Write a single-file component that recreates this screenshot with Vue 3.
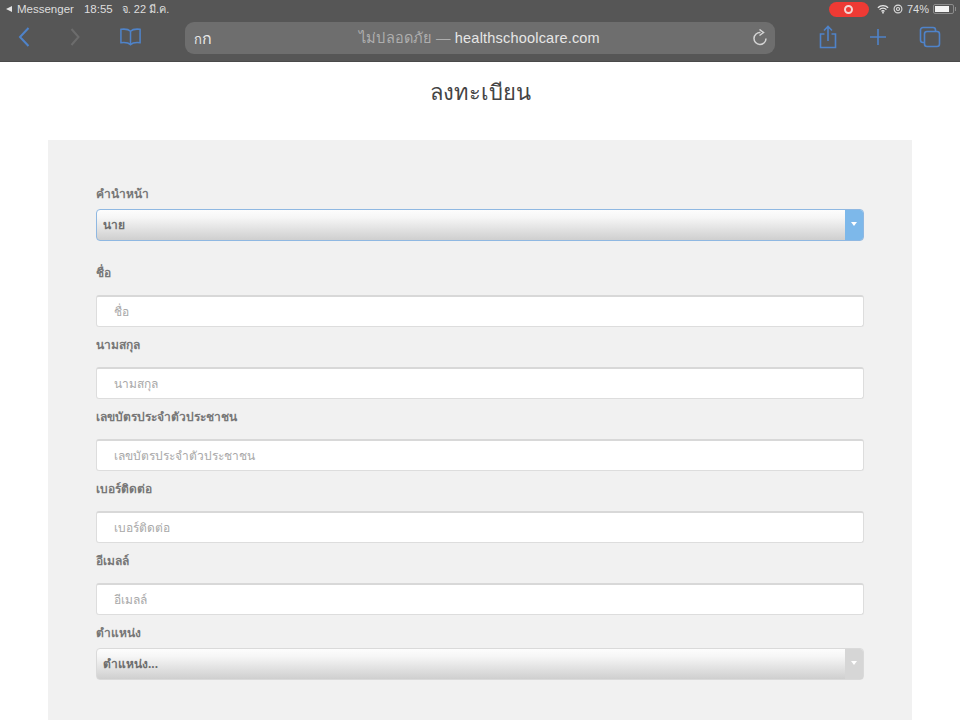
<script setup>
const inputs = ['ชื่อ', 'นามสกุล', 'เลขบัตรประจำตัวประชาชน', 'เบอร์ติดต่อ', 'อีเมลล์']
</script>

<template>
  <div class="page">
    <header class="chrome">
      <div class="status">
        <div class="status-left">
          <span class="back-tri"></span>
          <span>Messenger</span>
          <span class="time">18:55</span>
          <span class="date">จ. 22 มี.ค.</span>
        </div>
        <div class="status-right">
          <span class="rec"><span class="rec-dot"></span></span>
          <svg class="wifi" width="12" height="10" viewBox="0 0 14 11">
            <path d="M1 4a8.500 8.500 0 0 1 12 0M3 6.300a5.300 5.300 0 0 1 8 0M5.200 8.300a2.500 2.500 0 0 1 3.600 0" fill="none" stroke="#e8e8e8" stroke-width="1.500" />
            <circle cx="7" cy="9.800" r="1" fill="#e8e8e8" />
          </svg>
          <svg width="10" height="10" viewBox="0 0 11 11">
            <circle cx="5.500" cy="5.500" r="4.300" fill="none" stroke="#ddd" stroke-width="1.200" />
            <circle cx="5.500" cy="5.500" r="1.700" fill="none" stroke="#ddd" stroke-width="1.200" />
          </svg>
          <span class="pct">74%</span>
          <span class="battery"><span class="battery-fill"></span></span>
          <span class="battery-tip"></span>
        </div>
      </div>
      <div class="toolbar">
        <div class="tools-left">
          <svg width="14" height="22" viewBox="0 0 14 22"><path d="M11.500 2 3 11l8.500 9" fill="none" stroke="#4f83c9" stroke-width="2" /></svg>
          <svg class="forward" width="14" height="22" viewBox="0 0 14 22"><path d="M3.500 3l7 8-7 8" fill="none" stroke="#6c6c6c" stroke-width="2" /></svg>
          <svg class="book" width="23" height="20" viewBox="0 0 24 20">
            <path d="M12 4C10 2 6 1.500 2 2v14c4-.5 8 0 10 2 2-2 6-2.500 10-2V2c-4-.5-8 0-10 2zM12 4v14" fill="none" stroke="#4f83c9" stroke-width="1.600" />
          </svg>
        </div>
        <div class="address">
          <span class="aa"><span class="aa-small">ก</span>ก</span>
          <span class="url"><span class="unsafe">ไม่ปลอดภัย — </span>healthschoolcare.com</span>
          <svg class="reload" width="16" height="18" viewBox="0 0 16 18">
            <path d="M8.500 3.500a6 6 0 1 0 5.500 6" fill="none" stroke="#d4d4d4" stroke-width="1.500" />
            <path d="M7.500 0.500l4 3-4 3" fill="none" stroke="#d4d4d4" stroke-width="1.500" />
          </svg>
        </div>
        <div class="tools-right">
          <svg width="18" height="24" viewBox="0 0 18 24">
            <path d="M5.500 9H1.500v13.500h15V9h-4M9 16V2M5 5.500 9 1.500l4 4" fill="none" stroke="#4f83c9" stroke-width="1.600" />
          </svg>
          <svg width="16" height="16" viewBox="0 0 16 16"><path d="M8 0v16M0 8h16" stroke="#4f83c9" stroke-width="1.600" /></svg>
          <svg width="22" height="22" viewBox="0 0 22 22">
            <path d="M5.500 16.500H4A2.500 2.500 0 0 1 1.500 14V4A2.500 2.500 0 0 1 4 1.500h10A2.500 2.500 0 0 1 16.500 4v1.500" fill="none" stroke="#4f83c9" stroke-width="1.600" />
            <rect x="5.500" y="5.500" width="15" height="15" rx="2.500" fill="none" stroke="#4f83c9" stroke-width="1.600" />
          </svg>
        </div>
      </div>
    </header>

    <h1 class="title">ลงทะเบียน</h1>

    <form class="panel">
      <label class="label">คำนำหน้า</label>
      <div class="select active">
        <span class="select-text">นาย</span>
        <span class="select-btn"><span class="caret"></span></span>
      </div>

      <div v-for="(name, i) in inputs" :key="name" class="field" :class="{ first: i === 0 }">
        <label class="label">{{ name }}</label>
        <input class="input" type="text" :placeholder="name" />
      </div>

      <label class="label last-label">ตำแหน่ง</label>
      <div class="select">
        <span class="select-text">ตำแหน่ง...</span>
        <span class="select-btn"><span class="caret"></span></span>
      </div>
    </form>
  </div>
</template>

<style>
html, body { margin: 0; overflow: hidden; background: #fff; }
</style>

<style scoped>
.page {
  width: 960px;
  height: 720px;
  overflow: hidden;
  font-family: "Liberation Sans", "Noto Sans", sans-serif;
  background: #fff;
}
.chrome {
  height: 62px;
  background: #565656;
  box-sizing: border-box;
  border-bottom: 1px solid #4a4a4a;
}
.status {
  height: 18px;
  display: flex;
  justify-content: space-between;
  align-items: center;
  padding: 0 4px 0 6px;
  font-size: 11.5px;
  color: #dedede;
}
.status-left { display: flex; align-items: center; gap: 5px; }
.back-tri {
  width: 0;
  height: 0;
  border: 3.500px solid transparent;
  border-right: 6px solid #e4e4e4;
  border-left: 0;
}
.time { margin-left: 5px; }
.date { margin-left: 4px; font-size: 11px; }
.status-right { display: flex; align-items: center; gap: 4px; }
.rec {
  width: 40px;
  height: 15px;
  border-radius: 8px;
  background: #ee3a34;
  display: flex;
  align-items: center;
  justify-content: center;
  margin-right: 4px;
}
.rec-dot {
  width: 5px;
  height: 5px;
  border-radius: 50%;
  background: #ee3a34;
  border: 2px solid #f5d5d3;
}
.pct { font-size: 11px; }
.battery {
  width: 21px;
  height: 10px;
  box-sizing: border-box;
  border: 1px solid #8c8c8c;
  border-radius: 2px;
  padding: 1px;
  display: flex;
}
.battery-fill { width: 14px; background: #f4f4f4; }
.battery-tip { width: 1px; height: 4px; background: #8c8c8c; margin-left: -3px; }
.toolbar {
  height: 43px;
  display: flex;
  align-items: flex-start;
}
.tools-left {
  width: 185px;
  display: flex;
  align-items: center;
  height: 38px;
  padding-left: 17px;
  box-sizing: border-box;
}
.forward { margin-left: 37px; }
.book { margin-left: 37px; }
.address {
  width: 590px;
  height: 32px;
  margin-top: 4px;
  border-radius: 9px;
  background: #6e6e6e;
  display: flex;
  align-items: center;
  box-sizing: border-box;
  padding: 0 7px 0 9px;
  font-size: 14.500px;
  color: #e6e6e6;
}
.aa { font-size: 16px; color: #e8e8e8; }
.aa-small { font-size: 13px; }
.url {
  flex: 1;
  text-align: center;
  padding: 0 5px 2px 0;
  letter-spacing: 0.2px;
  color: #e6e6e6;
}
.unsafe { color: #aeaeae; }
.tools-right {
  flex: 1;
  height: 38px;
  display: flex;
  align-items: center;
  justify-content: space-between;
  padding: 0 19px 0 44px;
}
.title {
  margin: 18px 0 0;
  height: 60px;
  font-size: 22px;
  font-weight: 400;
  line-height: 25px;
  text-align: center;
  color: #444;
}
.panel {
  background: #f1f1f1;
  margin: 0 48px;
  height: 600px;
  padding: 45px 48px 0;
  box-sizing: border-box;
}
.label {
  display: block;
  height: 16px;
  line-height: 18px;
  font-size: 12px;
  font-weight: 700;
  color: #777;
  margin-bottom: 8px;
}
.field { margin-top: 9px; }
.field .label { margin-bottom: 15px; }
.field.first { margin-top: 23px; }
.last-label { margin-top: 9px; }
.input {
  display: block;
  width: 100%;
  height: 32px;
  box-sizing: border-box;
  background: #fff;
  border: 1px solid #ddd;
  border-top: 2px solid #d8d8d8;
  border-radius: 3px;
  padding: 0 17px;
  font: 12px "Liberation Sans", "Noto Sans", sans-serif;
  color: #555;
  outline: none;
}
.input::placeholder { color: #a8a8a8; opacity: 1; }
.select {
  height: 32px;
  box-sizing: border-box;
  display: flex;
  border: 1px solid #dadada;
  border-radius: 4px;
  overflow: hidden;
  background: linear-gradient(#fdfdfd, #f6f6f6 25%, #cfcfcf);
}
.select.active { border-color: #8fb8e2; }
.select-text {
  flex: 1;
  padding-left: 6px;
  line-height: 31px;
  font-size: 12px;
  font-weight: 700;
  color: #6e6e6e;
}
.select-btn {
  width: 18px;
  background: #d6d6d6;
  display: flex;
  align-items: center;
  justify-content: center;
}
.select.active .select-btn { background: #7db8ea; }
.caret {
  width: 0;
  height: 0;
  border: 3px solid transparent;
  border-top: 4px solid #fff;
  border-bottom: 0;
  margin-top: -2px;
}
</style>
